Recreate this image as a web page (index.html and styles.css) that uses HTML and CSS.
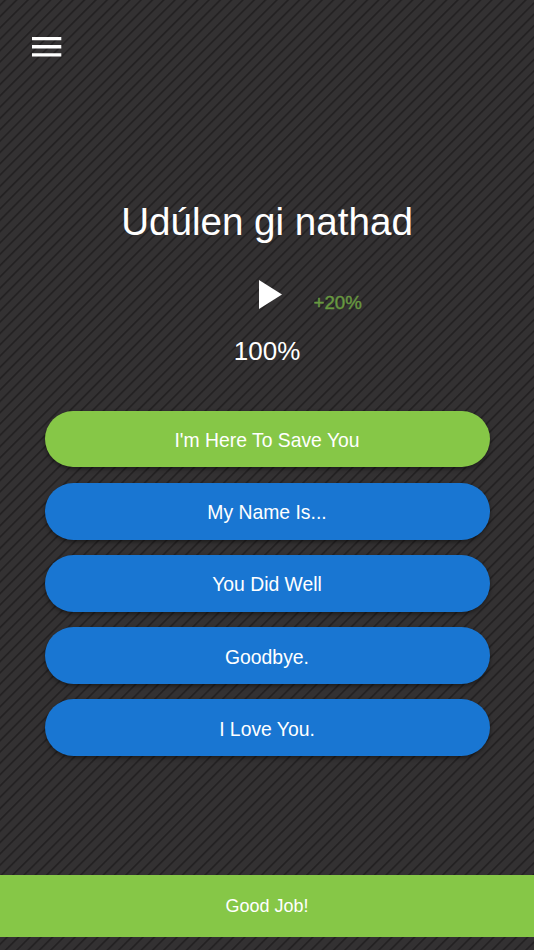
FILE: index.html
```html
<!DOCTYPE html>
<html lang="en">

<head>
	<meta charset="UTF-8">
	<title>Udúlen gi nathad</title>
	<meta name="viewport" content="width=device-width, initial-scale=1.0">
	<link rel="stylesheet" href="styles.css">
</head>

<body>
	<header>
		<button class="menu" aria-label="Menu">
			<svg viewBox="0 0 30 20"><path d="M0 0h29.3v3.3H0zM0 8h29.3v3.4H0zM0 16.2h29.3v3.4H0z" /></svg>
		</button>
	</header>
	<main>
		<h1 class="phrase">Udúlen gi nathad</h1>
		<div class="player">
			<button class="play" aria-label="Play">
				<svg viewBox="0 0 23 29"><path d="M0 0v29l23-14.5z" /></svg>
			</button>
			<span class="gain">+20%</span>
		</div>
		<div class="score">100%</div>
		<div class="answers">
			<button class="correct">I'm Here To Save You</button>
			<button>My Name Is...</button>
			<button>You Did Well</button>
			<button>Goodbye.</button>
			<button>I Love You.</button>
		</div>
	</main>
	<footer class="msg">Good Job!</footer>
</body>

</html>
```
FILE: styles.css
```css
* {
	box-sizing: border-box;
}

body {
	margin: 0;
	height: 100vh;
	padding-bottom: 13px;
	display: flex;
	flex-direction: column;
	overflow: hidden;
	color: #FFFFFF;
	font-family: "Liberation Sans", Arial, sans-serif;
	background: #333132 repeating-linear-gradient(135deg, #333132 0, #333132 2.4px, #232122 3.4px, #232122 4px, #333132 5.2px, #333132 8px);
}

button {
	padding: 0;
	border: 0 none;
	color: inherit;
	font-family: inherit;
	background: transparent;
}

header {
	padding: 37px 32px 0;
}

.menu,
.menu svg {
	display: block;
	width: 30px;
	height: 20px;
	fill: #FFFFFF;
}

main {
	flex: 1;
	display: flex;
	flex-direction: column;
	align-items: center;
}

.phrase {
	margin: 142px 0 0;
	font-size: 38.6px;
	font-weight: normal;
	line-height: 46px;
}

.player {
	position: relative;
	display: flex;
	justify-content: center;
	margin-top: 35px;
	padding-left: 6px;
}

.play,
.play svg {
	display: block;
	width: 23px;
	height: 29px;
	fill: #FFFFFF;
}

/* floats beside the play button */
.gain {
	position: absolute;
	left: 61px;
	top: 12px;
	color: #689940;
	font-size: 18.7px;
	line-height: 22px;
	-webkit-text-stroke: .4px #689940;
}

.score {
	margin-top: 27px;
	font-size: 26px;
	line-height: 30px;
}

.answers {
	display: flex;
	flex-direction: column;
	gap: 15.5px;
	width: 445px;
	margin: 44.7px 0 0 1px;
}

.answers button {
	height: 56.7px;
	padding: 3px 1px 0 0;
	border-radius: 29px;
	font-size: 19.35px;
	background: #1976d2;
	box-shadow: 0 2px 4px rgba(0, 0, 0, .45);
}

.answers .correct {
	background: #86c747;
}

.msg {
	display: flex;
	justify-content: center;
	align-items: center;
	height: 62px;
	font-size: 18px;
	background: #86c747;
}
```
